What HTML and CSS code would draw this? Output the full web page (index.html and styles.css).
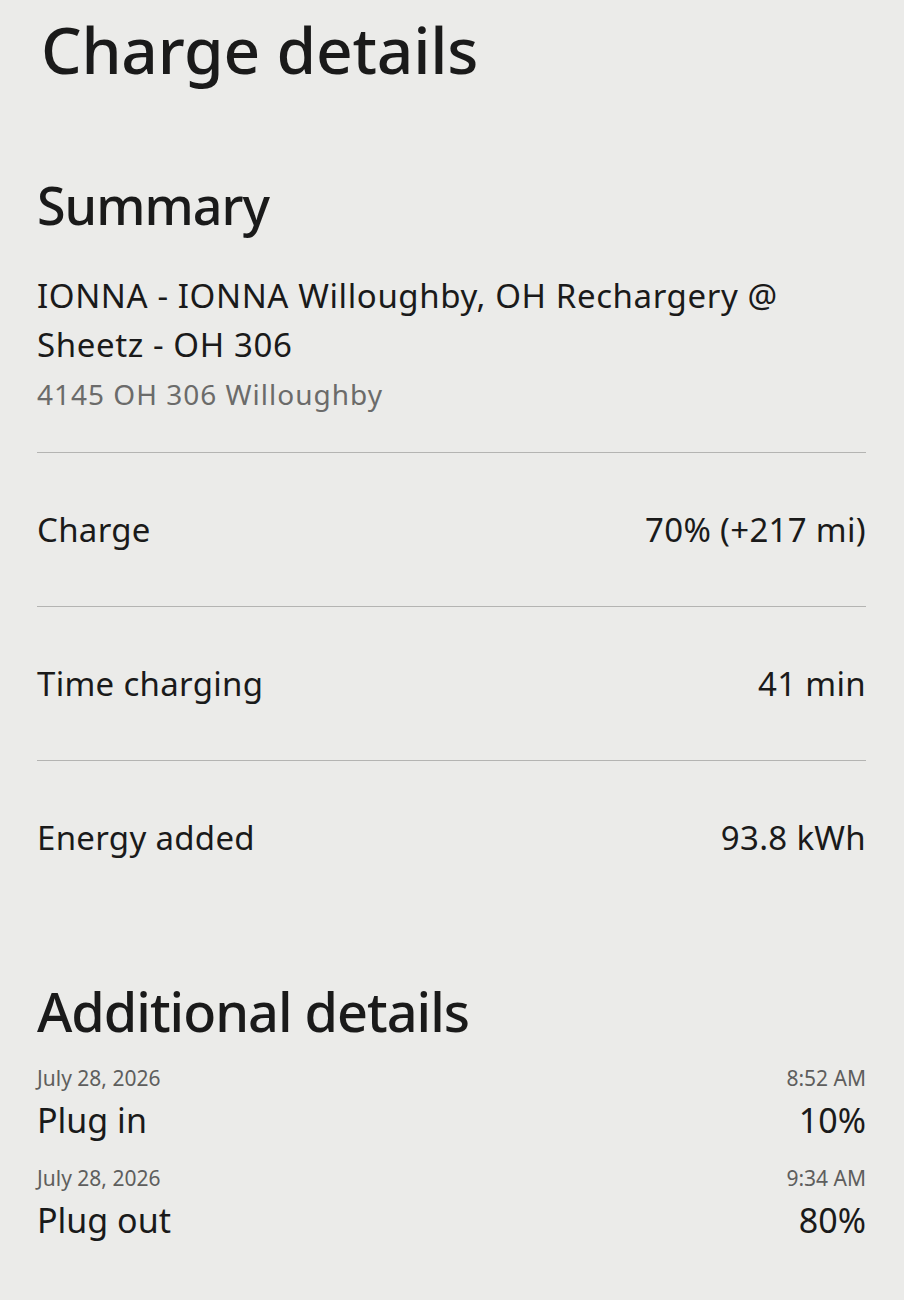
FILE: index.html
```html
<!DOCTYPE html>
<html lang="en">
<head>
    <meta charset="UTF-8">
    <meta name="viewport" content="width=device-width, initial-scale=1.0">
    <title>Charge details</title>
    <link rel="stylesheet" href="styles.css">
</head>
<body>

    <div class="page">
        <h1>Charge details</h1>

        <h2 class="summary-title">Summary</h2>
        <div class="station">
            <p class="station-name">IONNA - IONNA Willoughby, OH Rechargery @ Sheetz - OH 306</p>
            <p class="station-address">4145 OH 306 Willoughby</p>
        </div>

        <div class="rows">
            <div class="row">
                <span>Charge</span>
                <span>70% (+217 mi)</span>
            </div>
            <div class="row">
                <span>Time charging</span>
                <span>41 min</span>
            </div>
            <div class="row">
                <span>Energy added</span>
                <span>93.8 kWh</span>
            </div>
        </div>

        <h2 class="extra-title">Additional details</h2>
        <div class="events">
            <div class="event">
                <div class="event-meta">
                    <span>July 28, 2026</span>
                    <span>8:52 AM</span>
                </div>
                <div class="event-main">
                    <span>Plug in</span>
                    <span>10%</span>
                </div>
            </div>
            <div class="event">
                <div class="event-meta">
                    <span>July 28, 2026</span>
                    <span>9:34 AM</span>
                </div>
                <div class="event-main">
                    <span>Plug out</span>
                    <span>80%</span>
                </div>
            </div>
        </div>
    </div>

</body>
</html>
```

FILE: styles.css
```css
body {
    margin: 0;
    background-color: #ebebe9;
    color: #1a1a1a;
    font-family: "Noto Sans", "Open Sans", sans-serif;
}
.page {
    padding: 10px 38px 40px 37px;
}
h1 {
    margin: 0 0 0 4px;
    font-size: 64px;
    line-height: 80px;
    font-weight: 500;
    letter-spacing: -0.2px;
}
h2 {
    margin: 0;
    font-weight: 500;
    line-height: 64px;
    letter-spacing: -1px;
}
.summary-title {
    margin-top: 83px;
    font-size: 52px;
}
.station {
    margin-top: 34px;
}
.station p {
    margin: 0;
}
.station-name {
    font-size: 33px;
    line-height: 49px;
    letter-spacing: 0.6px;
}
.station-address {
    margin-top: 7px !important;
    font-size: 28px;
    line-height: 36px;
    letter-spacing: 1px;
    color: #6b6b6a;
}
.rows {
    margin-top: 40px;
    border-top: 1px solid #b4b4b2;
}
.row {
    display: flex;
    justify-content: space-between;
    align-items: center;
    height: 153px;
    font-size: 33px;
    line-height: 40px;
    letter-spacing: 0.3px;
    border-bottom: 1px solid #b4b4b2;
}
.row:last-child {
    border-bottom: none;
}
.extra-title {
    margin-top: 65px;
    font-size: 54px;
}
.events {
    margin-top: 22px;
    display: flex;
    flex-direction: column;
    gap: 24px;
}
.event-meta {
    display: flex;
    justify-content: space-between;
    font-size: 21px;
    line-height: 26px;
    color: #5e5e5d;
}
.event-main {
    display: flex;
    justify-content: space-between;
    margin-top: 8px;
    font-size: 34px;
    line-height: 42px;
}
```
